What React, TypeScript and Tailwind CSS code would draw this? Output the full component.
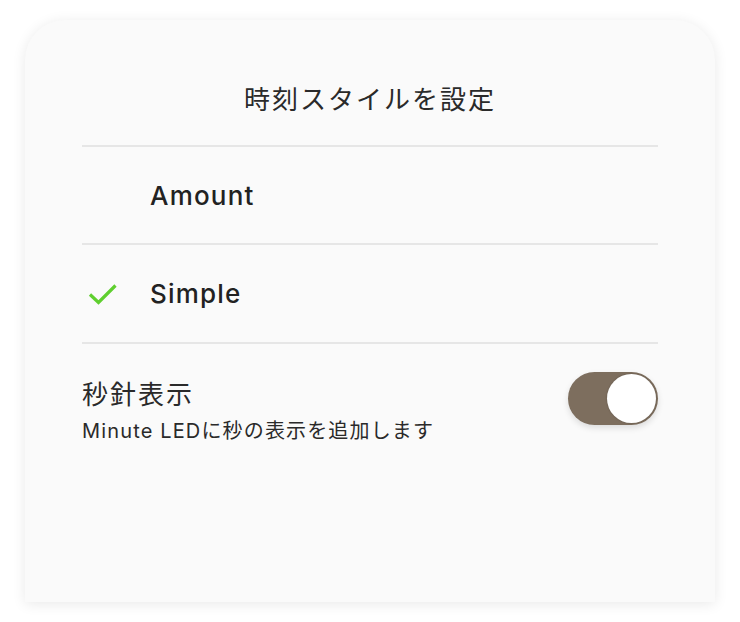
export default function App() {
  const jp = { fontFamily: '"Noto Sans CJK JP", sans-serif' };
  const lat = { fontFamily: 'Inter, "Noto Sans CJK JP", sans-serif' };
  return (
    <div className="w-[740px] h-[622px] bg-white pt-[20px] px-[25px] overflow-hidden">
      <div className="h-[582px] bg-[#fafafa] rounded-t-[40px] shadow-[0_2px_14px_rgba(0,0,0,0.09)] px-[57px]">
        <div className="h-[125px] flex items-start justify-center pt-[60px]">
          <h1 className="text-[26px] leading-[36px] tracking-[2px] text-[#2a2a2a]" style={jp}>時刻スタイルを設定</h1>
        </div>
        <div className="h-[2px] bg-[#e6e6e6]" />
        <div className="h-[96px] flex items-center">
          <div className="w-[68px]" />
          <span className="text-[26px] font-medium text-[#222] tracking-[1.2px]" style={lat}>Amount</span>
        </div>
        <div className="h-[2px] bg-[#e6e6e6]" />
        <div className="h-[97px] flex items-center">
          <div className="w-[68px] pl-[6px] flex items-center">
            <svg width="30" height="22" viewBox="0 0 30 22" fill="none">
              <path d="M2 11.5 L10.5 19.5 L27.5 2.5" stroke="#5fcf2f" strokeWidth="3.2" strokeLinecap="butt" strokeLinejoin="miter" />
            </svg>
          </div>
          <span className="text-[26px] font-medium text-[#222] tracking-[1.2px]" style={lat}>Simple</span>
        </div>
        <div className="h-[2px] bg-[#e6e6e6]" />
        <div className="flex items-start justify-between pt-[31px]">
          <div className="flex flex-col">
            <span className="text-[26px] leading-[36px] tracking-[2px] text-[#2a2a2a]" style={jp}>秒針表示</span>
            <span className="text-[20px] leading-[28px] mt-[6px] tracking-[1.15px] text-[#2a2a2a]" style={lat}>Minute LEDに秒の表示を追加します</span>
          </div>
          <div className="mt-[-3px] w-[90px] h-[53px] rounded-full bg-[#7d6e5e] relative shadow-[0_3px_6px_rgba(0,0,0,0.12)]">
            <div className="absolute right-[2px] top-[2px] w-[49px] h-[49px] rounded-full bg-white shadow-[0_0_2px_rgba(0,0,0,0.25)]" />
          </div>
        </div>
      </div>
    </div>
  );
}
